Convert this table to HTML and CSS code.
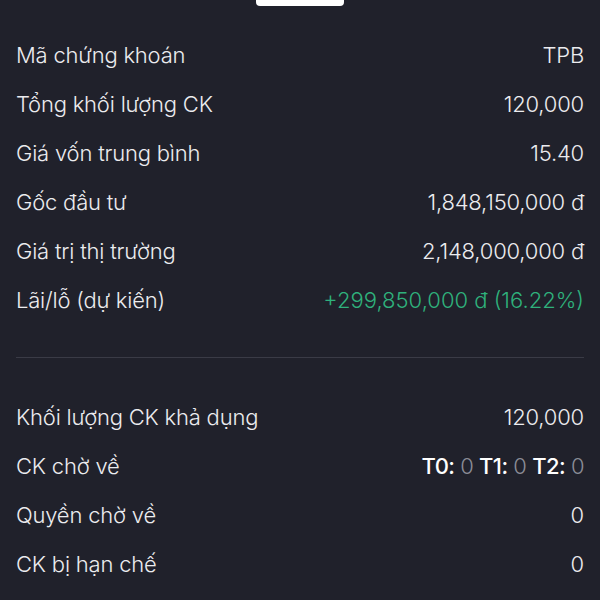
FILE: index.html
```html
<!DOCTYPE html>
<html lang="vi">
<head>
<meta charset="utf-8">
<link rel="stylesheet" href="styles.css">
</head>
<body>
<div class="screen">
  <div class="handle"></div>
  <div class="section first">
    <div class="row"><span class="label">Mã chứng khoán</span><span class="value">TPB</span></div>
    <div class="row"><span class="label">Tổng khối lượng CK</span><span class="value">120,000</span></div>
    <div class="row"><span class="label">Giá vốn trung bình</span><span class="value">15.40</span></div>
    <div class="row"><span class="label">Gốc đầu tư</span><span class="value">1,848,150,000 đ</span></div>
    <div class="row"><span class="label">Giá trị thị trường</span><span class="value">2,148,000,000 đ</span></div>
    <div class="row"><span class="label">Lãi/lỗ (dự kiến)</span><span class="value green">+299,850,000 đ (16.22%)</span></div>
  </div>
  <div class="divider"></div>
  <div class="section second">
    <div class="row"><span class="label">Khối lượng CK khả dụng</span><span class="value">120,000</span></div>
    <div class="row"><span class="label">CK chờ về</span><span class="value tight"><b>T0:</b> <span class="muted">0</span> <b>T1:</b> <span class="muted">0</span> <b>T2:</b> <span class="muted">0</span></span></div>
    <div class="row"><span class="label">Quyền chờ về</span><span class="value">0</span></div>
    <div class="row"><span class="label">CK bị hạn chế</span><span class="value">0</span></div>
  </div>
</div>
</body>
</html>
```
FILE: styles.css
```css
html, body {
  margin: 0;
  padding: 0;
  background: #20212b;
}
.screen {
  width: 600px;
  height: 600px;
  background: #20212b;
  color: #ececef;
  font-family: Inter, "Noto Sans", sans-serif;
  font-weight: 300;
  font-size: 22px;
  letter-spacing: -0.2px;
  padding: 0 16px;
  box-sizing: border-box;
  overflow: hidden;
  position: relative;
}
.handle {
  position: absolute;
  left: 256px;
  top: -6px;
  width: 88px;
  height: 12px;
  background: #ffffff;
  border-radius: 4px;
}
.section.first {
  padding-top: 30px;
}
.row {
  height: 49px;
  display: flex;
  align-items: center;
  justify-content: space-between;
}
.green {
  color: #2fb17c;
  letter-spacing: 0;
}
.divider {
  height: 1px;
  background: #3a3b46;
  margin-top: 33px;
}
.section.second {
  margin-top: 34px;
}
.tight {
  letter-spacing: -0.5px;
}
.value b {
  font-weight: 500;
  color: #ffffff;
}
.muted {
  color: #8b8d97;
}
```
